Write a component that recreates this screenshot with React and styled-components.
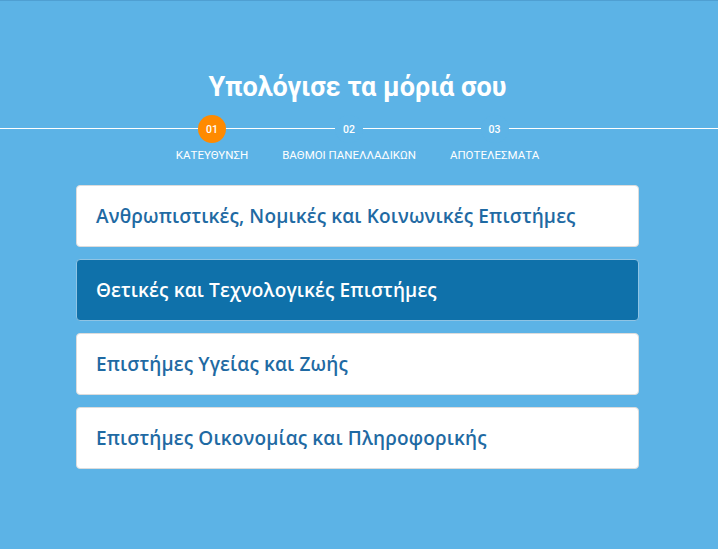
import React, { useState } from 'react'
import styled, { createGlobalStyle } from 'styled-components'

const GlobalStyle = createGlobalStyle`
  body {
    margin: 0;
    background: #5cb3e6;
    font-family: Roboto, "Noto Sans", sans-serif;
  }
`

const steps = [
    { num: '01', label: 'ΚΑΤΕΥΘΥΝΣΗ' },
    { num: '02', label: 'ΒΑΘΜΟΙ ΠΑΝΕΛΛΑΔΙΚΩΝ' },
    { num: '03', label: 'ΑΠΟΤΕΛΕΣΜΑΤΑ' },
]

const options = [
    'Ανθρωπιστικές, Νομικές και Κοινωνικές Επιστήμες',
    'Θετικές και Τεχνολογικές Επιστήμες',
    'Επιστήμες Υγείας και Ζωής',
    'Επιστήμες Οικονομίας και Πληροφορικής',
]

const App = () => {
    const [selected, setSelected] = useState(1)
    return (
        <Page>
            <GlobalStyle />
            <Title>Υπολόγισε τα μόριά σου</Title>
            <Stepper>
                {steps.map((step, i) => (
                    <Step key={step.num}>
                        <StepNum active={i === 0}>{step.num}</StepNum>
                        <StepLabel>{step.label}</StepLabel>
                    </Step>
                ))}
            </Stepper>
            <OptionList>
                {options.map((opt, i) => (
                    <Option key={opt} selected={i === selected} onClick={() => setSelected(i)}>
                        {opt}
                    </Option>
                ))}
            </OptionList>
        </Page>
    )
}

const Page = styled.div`
    min-height: 549px;
    box-sizing: border-box;
    border-top: 1px solid #4f9fd2;
    background: #5cb3e6;
    padding: 70px 3px 0 0;
`

const Title = styled.h1`
    margin: 0;
    text-align: center;
    color: #ffffff;
    font-size: 27px;
    font-weight: 700;
    line-height: 32px;
`

const Stepper = styled.div`
    position: relative;
    display: flex;
    justify-content: center;
    gap: 34px;
    margin-top: 12px;
    &::before {
        content: '';
        position: absolute;
        left: 0;
        right: -3px;
        top: 13px;
        height: 1px;
        background: #ffffff;
    }
`

const Step = styled.div`
    display: flex;
    flex-direction: column;
    align-items: center;
    position: relative;
`

const StepNum = styled.div`
    width: 28px;
    height: 28px;
    border-radius: 50%;
    display: flex;
    align-items: center;
    justify-content: center;
    color: #ffffff;
    font-size: 10.5px;
    font-weight: 500;
    background: ${p => (p.active ? '#ff8a00' : '#5cb3e6')};
`

const StepLabel = styled.div`
    margin-top: 5px;
    color: #ffffff;
    font-size: 11.5px;
    font-weight: 400;
    line-height: 14px;
    white-space: nowrap;
`

const OptionList = styled.div`
    width: 563px;
    margin: 23px auto 0;
    display: flex;
    flex-direction: column;
    gap: 12px;
`

const Option = styled.div`
    box-sizing: border-box;
    height: 62px;
    display: flex;
    align-items: center;
    padding: 0 19px;
    border-radius: 4px;
    border: 1px solid ${p => (p.selected ? '#8fc4e4' : '#dcdcdc')};
    background: ${p => (p.selected ? '#0f71aa' : '#ffffff')};
    color: ${p => (p.selected ? '#ffffff' : '#1f6aa3')};
    font-family: "Open Sans", "Noto Sans", sans-serif;
    font-size: 19px;
    font-weight: 600;
    letter-spacing: 0.15px;
    cursor: pointer;
`

export default App
